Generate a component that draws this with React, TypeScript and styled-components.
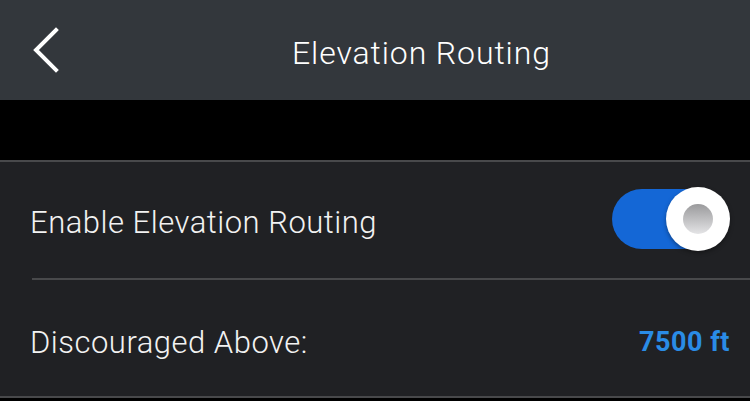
import React from 'react'
import styled, { createGlobalStyle } from 'styled-components'

const GlobalStyle = createGlobalStyle`
  html, body {
    margin: 0;
    padding: 0;
    background: #000;
    font-family: Roboto, 'Liberation Sans', sans-serif;
  }
`

const Screen = styled.div`
  width: 750px;
  height: 401px;
  display: flex;
  flex-direction: column;
  background: #000;
  overflow: hidden;
`

const Header = styled.div`
  height: 100px;
  display: flex;
  align-items: center;
  background: #33373c;
  padding-left: 30px;
  box-sizing: border-box;
`

const BackButton = styled.button`
  width: 34px;
  height: 46px;
  padding: 0;
  border: none;
  background: none;
  display: flex;
  align-items: center;
  justify-content: flex-start;
`

const Title = styled.h1`
  margin: 6px 0 0 228px;
  font-size: 32px;
  font-weight: 300;
  color: #fff;
  letter-spacing: 0.9px;
`

const Spacer = styled.div`
  height: 60px;
  background: #000;
`

const List = styled.div`
  background: #202124;
  border-top: 2px solid #48494b;
  border-bottom: 2px solid #48494b;
`

interface RowProps {
  divider?: boolean
}

const Row = styled.div<RowProps>`
  height: 116px;
  display: flex;
  align-items: center;
  justify-content: space-between;
  padding: 4px 20px 0 30px;
  position: relative;
  box-sizing: border-box;

  ${({ divider }) =>
    divider &&
    `
    &:after {
      content: '';
      position: absolute;
      left: 32px;
      right: 0;
      bottom: -2px;
      height: 2px;
      background: #48494b;
    }
  `}

  & + & {
    margin-top: 2px;
    padding-top: 8px;
  }
`

const Label = styled.span`
  font-size: 31px;
  font-weight: 300;
  color: #f2f2f2;
  letter-spacing: 0.5px;
`

const Value = styled.span`
  font-size: 27px;
  font-weight: 700;
  color: #2a8ce6;
  letter-spacing: 0.5px;
`

const Track = styled.div`
  position: relative;
  width: 110px;
  height: 60px;
  border-radius: 30px;
  background: #1467d6;
  margin: 0 8px 6px 0;
`

const Knob = styled.div`
  position: absolute;
  top: -2px;
  right: -8px;
  width: 64px;
  height: 64px;
  border-radius: 50%;
  background: #fff;
  box-shadow: 0 2px 4px rgba(0, 0, 0, 0.35);
  display: flex;
  align-items: center;
  justify-content: center;
`

const KnobCenter = styled.div`
  width: 30px;
  height: 30px;
  border-radius: 50%;
  background: linear-gradient(to bottom, #9a9a9c, #e4e4e6);
`

const Toggle: React.FC = () => (
  <Track>
    <Knob>
      <KnobCenter />
    </Knob>
  </Track>
)

const App: React.FC = () => (
  <Screen>
    <GlobalStyle />
    <Header>
      <BackButton aria-label="Back">
        <svg width="30" height="46" viewBox="0 0 30 46">
          <path
            d="M26 3 L6 23 L26 43"
            fill="none"
            stroke="#fff"
            strokeWidth="4"
            strokeLinecap="square"
          />
        </svg>
      </BackButton>
      <Title>Elevation Routing</Title>
    </Header>
    <Spacer />
    <List>
      <Row divider>
        <Label>Enable Elevation Routing</Label>
        <Toggle />
      </Row>
      <Row>
        <Label>Discouraged Above:</Label>
        <Value>7500 ft</Value>
      </Row>
    </List>
  </Screen>
)

export default App
